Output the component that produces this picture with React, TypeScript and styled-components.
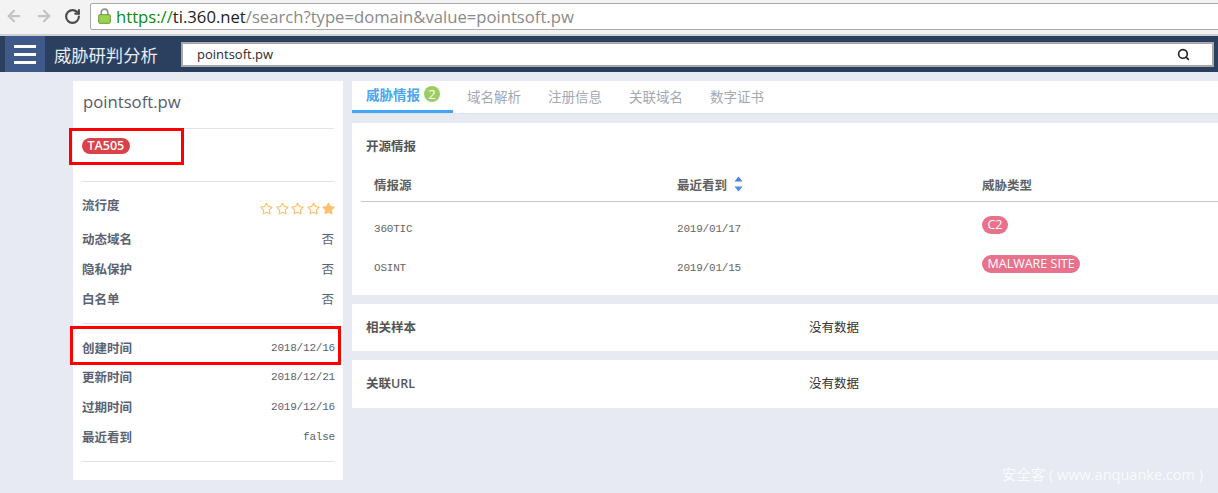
import React from 'react';
import styled, { createGlobalStyle } from 'styled-components';
import { ArrowLeft, ArrowRight, RotateCw, Search } from 'lucide-react';
import { FaRegStar, FaStar } from 'react-icons/fa';

const GlobalStyle = createGlobalStyle`
  html, body { margin: 0; padding: 0; background: #e7eaf2; }
  * { box-sizing: border-box; }
  body { font-family: "Open Sans", "Noto Sans CJK SC", sans-serif; }
`;

const Page = styled.div`
  position: relative;
  width: 1218px;
  height: 493px;
  overflow: hidden;
  background: #e7eaf2;
`;

const BrowserBar = styled.div`
  display: flex;
  align-items: center;
  height: 36px;
  padding: 0 0 2px 5px;
  background: #f3f3f3;
  border-bottom: 2px solid #cfcfcf;
`;

const NavIcon = styled.span<{ $color: string; $gap: number }>`
  display: flex;
  margin-right: ${p => p.$gap}px;
  color: ${p => p.$color};
`;

const AddressBox = styled.div`
  display: flex;
  align-items: center;
  flex: 1;
  height: 27px;
  margin-right: -4px;
  padding-left: 7px;
  background: #fff;
  border: 1px solid #a9a9a9;
  border-radius: 2px;
  font-size: 16.67px;
  color: #8a8a8a;
  white-space: nowrap;
`;

const Https = styled.span`
  color: #0b8a12;
  margin-left: 5px;
`;

const Host = styled.span`
  color: #222;
`;

const TopNav = styled.div`
  display: flex;
  align-items: center;
  height: 36px;
  padding-left: 5px;
  background: #2b405f;
`;

const MenuButton = styled.div`
  display: flex;
  flex-direction: column;
  justify-content: center;
  gap: 5px;
  width: 40px;
  height: 36px;
  padding: 0 9px;
  background: #3f5a8a;
`;

const MenuBar = styled.i`
  display: block;
  height: 3px;
  background: #fff;
`;

const AppTitle = styled.div`
  width: 136px;
  padding-left: 9px;
  font-size: 17.3px;
  color: #e8ecf4;
  white-space: nowrap;
`;

const SearchBox = styled.div`
  display: flex;
  align-items: center;
  justify-content: space-between;
  width: 1033px;
  height: 25px;
  padding: 0 22px 0 14px;
  background: #fff;
  border: 2px solid #a8a8a8;
  font-size: 13px;
  color: #2b2b2b;
`;

const Content = styled.div`
  display: flex;
  gap: 9px;
  padding: 9px 0 0 73px;
`;

const SideCard = styled.aside`
  width: 270px;
  height: 399px;
  padding: 0 9px;
  background: #fff;
`;

const DomainTitle = styled.div`
  height: 48px;
  padding: 8px 0 0 1px;
  line-height: 26px;
  font-size: 16.7px;
  color: #555d6b;
  border-bottom: 1px solid #dfe3ee;
`;

const TagBlock = styled.div`
  display: flex;
  align-items: flex-start;
  height: 53px;
  padding-top: 9px;
  border-bottom: 1px solid #e0e0e8;
`;

const ThreatTag = styled.span`
  height: 16px;
  padding: 0 5.5px;
  border-radius: 8px;
  background: #dc4048;
  color: #fff;
  font-size: 12.5px;
  font-weight: 600;
  line-height: 16px;
`;

const InfoSection = styled.div<{ $top: number }>`
  padding: ${p => p.$top}px 0 9px;
  border-bottom: 1px solid #e0e0e8;
`;

const PopularityRow = styled.div`
  display: flex;
  justify-content: space-between;
  height: 34px;
`;

const InfoRow = styled.div<{ $height?: number }>`
  display: flex;
  align-items: center;
  justify-content: space-between;
  height: ${p => p.$height ?? 30}px;
`;

const InfoLabel = styled.span`
  padding-top: 1px;
  font-size: 12.5px;
  font-weight: 700;
  line-height: 30px;
  color: #5b6272;
`;

const InfoValue = styled.span`
  margin-bottom: 2px;
  font-size: 12.5px;
  color: #5b6272;
`;

const MonoValue = styled.span`
  margin-right: -1px;
  font-family: "Liberation Mono", monospace;
  font-size: 11px;
  letter-spacing: -0.2px;
  color: #5b6272;
`;

const Stars = styled.span`
  display: flex;
  align-self: flex-end;
  gap: 2.5px;
  margin: 0 -1px 9px 0;
  font-size: 13px;
  color: #fbc16b;
`;

const MainColumn = styled.main`
  display: flex;
  flex-direction: column;
  width: 866px;
`;

const TabBar = styled.nav`
  display: flex;
  height: 33px;
  margin-bottom: 9px;
  background: #fff;
  border-bottom: 1px solid #e0e3ea;
`;

const Tab = styled.div<{ $active?: boolean }>`
  display: flex;
  align-items: center;
  gap: 3px;
  width: ${p => (p.$active ? '101px' : '81px')};
  height: 32px;
  padding: 0 0 3px;
  padding-left: ${p => (p.$active ? '14px' : '14px')};
  font-size: 13.5px;
  font-weight: ${p => (p.$active ? 600 : 400)};
  color: ${p => (p.$active ? '#4aa6ee' : '#a3a8b2')};
  border-bottom: ${p => (p.$active ? '3px solid #42a5f5' : '0')};
`;

const CountBadge = styled.span`
  display: flex;
  align-items: center;
  justify-content: center;
  width: 16px;
  height: 16px;
  margin-left: 1px;
  border-radius: 50%;
  background: #9ccc65;
  color: #fff;
  font-size: 13px;
  font-weight: 400;
`;

const Panel = styled.section<{ $height: number; $gap?: number }>`
  height: ${p => p.$height}px;
  margin-bottom: ${p => p.$gap ?? 9}px;
  background: #fff;
`;

const PanelTitle = styled.div`
  height: 46px;
  padding: 15px 0 0 14px;
  line-height: 18px;
  font-size: 12.5px;
  font-weight: 600;
  color: #555;
`;

const OpenSourceTable = styled.div`
  margin-left: 9px;
`;

const TableRow = styled.div<{ $head?: boolean }>`
  display: grid;
  grid-template-columns: 303px 305px 1fr;
  align-items: center;
  height: ${p => (p.$head ? '33px' : '39px')};
  padding-left: 13px;
  padding-bottom: ${p => (p.$head ? '2px' : '0')};
  margin-bottom: ${p => (p.$head ? '7px' : '0')};
  border-bottom: ${p => (p.$head ? '1px solid #c9c9c9' : '0')};
`;

const HeadCell = styled.span`
  display: flex;
  align-items: center;
  gap: 7px;
  font-size: 12.5px;
  font-weight: 600;
  color: #5f5f5f;
`;

const MonoCell = styled.span`
  font-family: "Liberation Mono", monospace;
  font-size: 11px;
  letter-spacing: -0.2px;
  color: #666;
`;

const TypeTag = styled.span`
  justify-self: start;
  height: 18px;
  margin-bottom: 8px;
  padding: 0 5.5px;
  border-radius: 9px;
  background: #e8728c;
  color: #fff;
  font-size: 12.5px;
  line-height: 18px;
  white-space: nowrap;
`;

const EmptyRow = styled.div<{ $lift: number }>`
  display: grid;
  grid-template-columns: 443px 1fr;
  align-items: center;
  height: 100%;
  padding: 0 14px ${p => p.$lift}px;
  font-size: 12.5px;
`;

const EmptyLabel = styled.span`
  font-weight: 600;
  color: #555;
`;

const EmptyText = styled.span`
  color: #333;
`;

const Highlight = styled.div<{ $x: number; $y: number; $w: number; $h: number }>`
  position: absolute;
  left: ${p => p.$x}px;
  top: ${p => p.$y}px;
  width: ${p => p.$w}px;
  height: ${p => p.$h}px;
  border: 3px solid #f00;
`;

const Watermark = styled.div`
  position: absolute;
  right: 15px;
  bottom: 9px;
  font-size: 14.5px;
  color: rgba(255, 255, 255, 0.8);
  white-space: nowrap;
`;

const LockIcon = () => (
  <svg width="13" height="16" viewBox="0 0 13 16">
    <path d="M3.2 7V4.4a3.3 3.3 0 0 1 6.6 0V7" fill="none" stroke="#8f8f8f" strokeWidth="1.6" />
    <rect x="0.7" y="6.7" width="11.6" height="8.6" rx="1" fill="#9ad34f" stroke="#6a9a3a" />
  </svg>
);

const SortIcon = () => (
  <svg width="9" height="16" viewBox="0 0 9 16">
    <path d="M4.5 0.5 8.5 5.5H0.5Z" fill="#4a7fe0" />
    <path d="M4.5 15.5 8.5 10.5H0.5Z" fill="#4a8cf5" />
  </svg>
);

const plainRows = [
  { label: '动态域名', value: '否' },
  { label: '隐私保护', value: '否' },
  { label: '白名单', value: '否' },
];

const dateRows = [
  { label: '更新时间', value: '2018/12/21' },
  { label: '过期时间', value: '2019/12/16' },
  { label: '最近看到', value: 'false' },
];

const intelRows = [
  { source: '360TIC', seen: '2019/01/17', type: 'C2' },
  { source: 'OSINT', seen: '2019/01/15', type: 'MALWARE SITE' },
];

export default function App(): JSX.Element {
  return (
    <Page>
      <GlobalStyle />
      <BrowserBar>
        <NavIcon $color="#c4c4c4" $gap={12}><ArrowLeft size={18} strokeWidth={3} /></NavIcon>
        <NavIcon $color="#c4c4c4" $gap={11}><ArrowRight size={18} strokeWidth={3} /></NavIcon>
        <NavIcon $color="#4a4a4a" $gap={9}><RotateCw size={17} strokeWidth={3} /></NavIcon>
        <AddressBox>
          <LockIcon />
          <span><Https>https://</Https><Host>ti.360.net</Host>/search?type=domain&amp;value=pointsoft.pw</span>
        </AddressBox>
      </BrowserBar>

      <TopNav>
        <MenuButton><MenuBar /><MenuBar /><MenuBar /></MenuButton>
        <AppTitle>威胁研判分析</AppTitle>
        <SearchBox>
          pointsoft.pw
          <Search size={13} strokeWidth={3} color="#222" />
        </SearchBox>
      </TopNav>

      <Content>
        <SideCard>
          <DomainTitle>pointsoft.pw</DomainTitle>
          <TagBlock><ThreatTag>TA505</ThreatTag></TagBlock>
          <InfoSection $top={8}>
            <PopularityRow>
              <InfoLabel>流行度</InfoLabel>
              <Stars>
                <FaRegStar /><FaRegStar /><FaRegStar /><FaRegStar /><FaStar />
              </Stars>
            </PopularityRow>
            {plainRows.map(row => (
              <InfoRow key={row.label}>
                <InfoLabel>{row.label}</InfoLabel>
                <InfoValue>{row.value}</InfoValue>
              </InfoRow>
            ))}
          </InfoSection>
          <InfoSection $top={10}>
            <InfoRow $height={28}>
              <InfoLabel>创建时间</InfoLabel>
              <MonoValue>2018/12/16</MonoValue>
            </InfoRow>
            {dateRows.map(row => (
              <InfoRow key={row.label}>
                <InfoLabel>{row.label}</InfoLabel>
                <MonoValue>{row.value}</MonoValue>
              </InfoRow>
            ))}
          </InfoSection>
        </SideCard>

        <MainColumn>
          <TabBar>
            <Tab $active>威胁情报<CountBadge>2</CountBadge></Tab>
            <Tab>域名解析</Tab>
            <Tab>注册信息</Tab>
            <Tab>关联域名</Tab>
            <Tab>数字证书</Tab>
          </TabBar>

          <Panel $height={172}>
            <PanelTitle>开源情报</PanelTitle>
            <OpenSourceTable>
              <TableRow $head>
                <HeadCell>情报源</HeadCell>
                <HeadCell>最近看到<SortIcon /></HeadCell>
                <HeadCell>威胁类型</HeadCell>
              </TableRow>
              {intelRows.map(row => (
                <TableRow key={row.source}>
                  <MonoCell>{row.source}</MonoCell>
                  <MonoCell>{row.seen}</MonoCell>
                  <TypeTag>{row.type}</TypeTag>
                </TableRow>
              ))}
            </OpenSourceTable>
          </Panel>

          <Panel $height={47}>
            <EmptyRow $lift={2}>
              <EmptyLabel>相关样本</EmptyLabel>
              <EmptyText>没有数据</EmptyText>
            </EmptyRow>
          </Panel>

          <Panel $height={48} $gap={0}>
            <EmptyRow $lift={4}>
              <EmptyLabel>关联URL</EmptyLabel>
              <EmptyText>没有数据</EmptyText>
            </EmptyRow>
          </Panel>
        </MainColumn>
      </Content>

      <Highlight $x={69} $y={128} $w={115} $h={37} />
      <Highlight $x={70} $y={326} $w={271} $h={39} />
      <Watermark>安全客 ( www.anquanke.com )</Watermark>
    </Page>
  );
}
